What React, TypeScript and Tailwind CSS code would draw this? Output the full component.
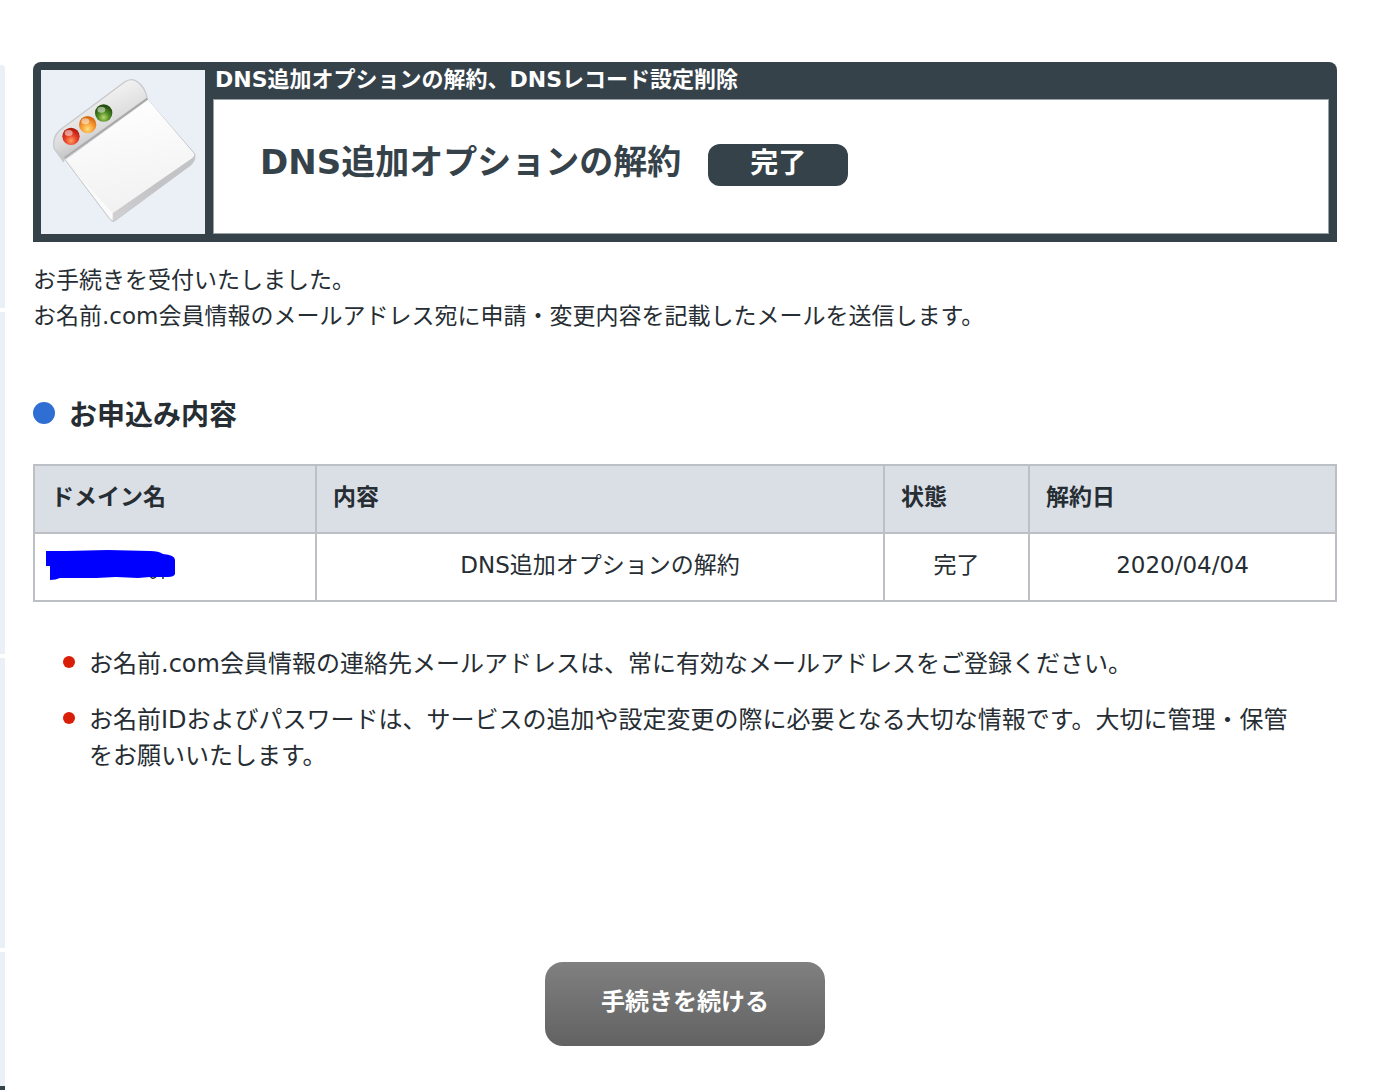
const ORDERS = [
    { content: 'DNS追加オプションの解約', status: '完了', date: '2020/04/04' },
];

const NOTES = [
    'お名前.com会員情報の連絡先メールアドレスは、常に有効なメールアドレスをご登録ください。',
    'お名前IDおよびパスワードは、サービスの追加や設定変更の際に必要となる大切な情報です。大切に管理・保管をお願いいたします。',
];

function WindowIcon() {
    return (
        <svg viewBox="63 60 492 492" className="block size-full" aria-hidden="true">
            <defs>
                <linearGradient id="bar" x1="0.35" y1="0.2" x2="0.65" y2="0.8">
                    <stop offset="0" stopColor="#f3f3f3" />
                    <stop offset="0.6" stopColor="#dcdcdd" />
                    <stop offset="1" stopColor="#b9b9bb" />
                </linearGradient>
                <linearGradient id="sheet" x1="0.3" y1="0" x2="0.5" y2="1">
                    <stop offset="0" stopColor="#ffffff" />
                    <stop offset="0.5" stopColor="#f8f8f8" />
                    <stop offset="1" stopColor="#f1f1f1" />
                </linearGradient>
                <linearGradient id="edge" x1="0" y1="1" x2="1" y2="0">
                    <stop offset="0" stopColor="#d8d8da" />
                    <stop offset="0.5" stopColor="#c3c3c6" />
                    <stop offset="1" stopColor="#c4c5c8" />
                </linearGradient>
                <radialGradient id="red" cx="0.5" cy="0.75" r="0.65">
                    <stop offset="0" stopColor="#ffa05a" />
                    <stop offset="0.5" stopColor="#e8432c" />
                    <stop offset="1" stopColor="#b51c0c" />
                </radialGradient>
                <radialGradient id="orange" cx="0.5" cy="0.75" r="0.65">
                    <stop offset="0" stopColor="#ffe07a" />
                    <stop offset="0.5" stopColor="#f9a13c" />
                    <stop offset="1" stopColor="#d96b10" />
                </radialGradient>
                <radialGradient id="green" cx="0.5" cy="0.75" r="0.65">
                    <stop offset="0" stopColor="#b7d96c" />
                    <stop offset="0.5" stopColor="#4f8a24" />
                    <stop offset="1" stopColor="#234d0c" />
                </radialGradient>
            </defs>
            <path d="M136 330L382 148L525 312Q528 330 514 344L284 513Q277 518 270 508Z" fill="url(#edge)" stroke="#c6c7ca" strokeWidth="3" />
            <path d="M136 330L384 149L523 312Q524 320 516 325L278 490Z" fill="url(#sheet)" />
            <path d="M136 330L278 488L278 512L268 505Z" fill="#fbfbfb" />
            <path d="M136 330L268 505L278 514" fill="none" stroke="#cccdd0" strokeWidth="3" />
            <path d="M130 334L102 295Q96 262 120 240L314 96Q334 82 352 95Q376 112 382 146L136 324Z" fill="url(#bar)" stroke="#c8c9cc" strokeWidth="4" />
            <path d="M134 324L382 146" stroke="#a9a9ab" strokeWidth="6" />
            <circle cx="153" cy="259" r="26" fill="url(#red)" />
            <circle cx="203" cy="224" r="26" fill="url(#orange)" />
            <circle cx="251" cy="189" r="26" fill="url(#green)" />
            <ellipse cx="146" cy="249" rx="12" ry="9" fill="#ffffff" opacity="0.5" />
            <ellipse cx="196" cy="214" rx="12" ry="9" fill="#ffffff" opacity="0.5" />
            <ellipse cx="244" cy="179" rx="12" ry="9" fill="#ffffff" opacity="0.5" />
        </svg>
    );
}

function SideStrip() {
    return (
        <aside className="flex w-[5px] shrink-0 flex-col gap-1 pt-[65px]">
            <div className="h-[243px] rounded-tr bg-[#ebeff6]" />
            <div className="h-[342px] bg-[#ebeff6]" />
            <div className="h-[290px] bg-[#ebeff6]" />
            <div className="flex-1 border-b-4 border-[#36424a] bg-[#ebeff6]" />
        </aside>
    );
}

export default function App() {
    return (
        <div className="flex min-h-screen bg-white font-['DejaVu_Sans','Noto_Sans_CJK_JP',sans-serif] text-[#262d33]" lang="ja">
            <SideStrip />
            <main className="min-w-0 flex-1 pt-[62px] pr-[46px] pb-11 pl-7">
                <header className="flex gap-2 rounded-t-lg bg-[#36424a] px-2 pb-2">
                    <div className="mt-2 size-[164px] shrink-0 bg-[#ebeff6]">
                        <WindowIcon />
                    </div>
                    <div className="flex min-w-0 flex-1 flex-col">
                        <p className="h-[37px] pl-[2px] text-[22px] leading-9 font-bold text-white">
                            DNS追加オプションの解約、DNSレコード設定削除
                        </p>
                        <div className="flex flex-1 items-center gap-[27px] border border-[#9aa1a6] bg-white pb-2 pl-[46px]">
                            <h1 className="pb-[2px] text-[34px] leading-[42px] font-bold text-[#36424a]">DNS追加オプションの解約</h1>
                            <span className="mt-1 h-[42px] w-[140px] rounded-xl bg-[#36424a] text-center text-[28px] leading-10 font-bold text-white">
                                完了
                            </span>
                        </div>
                    </div>
                </header>

                <p className="mt-5 text-[23px] leading-9">
                    お手続きを受付いたしました。
                    <br />
                    お名前.com会員情報のメールアドレス宛に申請・変更内容を記載したメールを送信します。
                </p>

                <h2 className="mt-[60px] flex gap-[14px] text-[28px] leading-[44px] font-bold">
                    <span className="mt-2 size-[22px] rounded-full bg-[#2f6fd3]" />
                    お申込み内容
                </h2>

                <table className="mt-[26px] w-full table-fixed border-collapse text-[23px] leading-8">
                    <colgroup>
                        <col className="w-[282px]" />
                        <col />
                        <col className="w-[145px]" />
                        <col className="w-[307px]" />
                    </colgroup>
                    <thead>
                        <tr className="h-[68px] bg-[#dadfe6] text-left">
                            <th scope="col" className="border-2 border-[#bcc0c4] px-4 pb-1">ドメイン名</th>
                            <th scope="col" className="border-2 border-[#bcc0c4] px-4 pb-1">内容</th>
                            <th scope="col" className="border-2 border-[#bcc0c4] px-4 pb-1">状態</th>
                            <th scope="col" className="border-2 border-[#bcc0c4] px-4 pb-1">解約日</th>
                        </tr>
                    </thead>
                    <tbody>
                        {ORDERS.map((order) => (
                            <tr key={order.date} className="h-[68px] text-center">
                                <td className="border-2 border-[#bcc0c4] px-[11px] pb-1">
                                    {/* domain name is masked */}
                                    <svg viewBox="0 0 130 30" className="block h-[30px] w-[130px]" aria-hidden="true">
                                        <path d="M104 26q2 4 6 1M117 25v4" stroke="#262d33" strokeWidth="1.5" fill="none" />
                                        <path d="M0 1L20 1L62 0L104 1Q113 1 117 4Q129 5 129 10L129 24Q128 27 122 27L104 27L92 28L70 27L50 28L14 28Q10 30 4 30L4 16L0 16Z" fill="#0000fe" />
                                    </svg>
                                </td>
                                <td className="border-2 border-[#bcc0c4] px-4 pb-1">{order.content}</td>
                                <td className="border-2 border-[#bcc0c4] px-4 pb-1">{order.status}</td>
                                <td className="border-2 border-[#bcc0c4] px-4 pb-1">{order.date}</td>
                            </tr>
                        ))}
                    </tbody>
                </table>

                <ul className="mt-11 flex flex-col gap-5 pr-9 pl-[30px] text-[24px] leading-9">
                    {NOTES.map((note) => (
                        <li key={note} className="flex gap-[14px]">
                            <span className="mt-[10px] size-3 shrink-0 rounded-full bg-[#d81e06]" />
                            <span>{note}</span>
                        </li>
                    ))}
                </ul>

                <div className="mt-[188px] flex justify-center">
                    <button
                        type="button"
                        className="h-[84px] w-[280px] rounded-[18px] bg-linear-to-b from-[#808080] to-[#626262] pb-1 text-[24px] font-bold text-white"
                    >
                        手続きを続ける
                    </button>
                </div>
            </main>
        </div>
    );
}
